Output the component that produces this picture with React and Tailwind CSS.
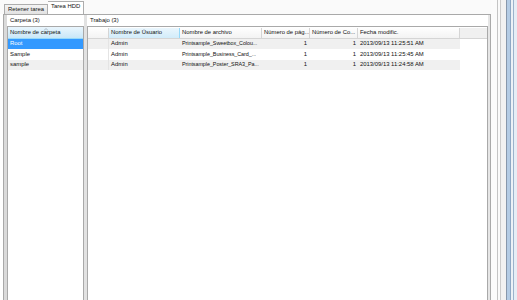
const rows = [
  { user: 'Admin', file: 'Printsample_Sweetbox_Colou...', pages: '1', copies: '1', date: '2013/09/13 11:25:51 AM' },
  { user: 'Admin', file: 'Printsample_Business_Card_...', pages: '1', copies: '1', date: '2013/09/13 11:25:45 AM' },
  { user: 'Admin', file: 'Printsample_Poster_SRA3_Pa...', pages: '1', copies: '1', date: '2013/09/13 11:24:58 AM' },
];

const folders = ['Root', 'Sample', 'sample'];

const SortCaret = () => (
  <svg className="absolute top-[1px] left-1/2 -translate-x-1/2" width="5" height="3" viewBox="0 0 5 3">
    <path d="M0.5 2.5 L2.5 0.5 L4.5 2.5" fill="none" stroke="#9aa7b5" strokeWidth="0.8" />
  </svg>
);

const FrameEdge = () => (
  <div className="w-[26px] flex shrink-0">
    <div className="w-[6px] bg-[#fbfbfb]" />
    <div className="w-[1px] bg-[#c4c4c4]" />
    <div className="w-[2px] bg-[#fafafa]" />
    <div className="w-[1px] bg-[#cbcbcb]" />
    <div className="w-[5px] bg-[#f1f1f1]" />
    <div className="w-[1px] bg-[#8797ab]" />
    <div className="w-[3px] bg-[#b3cbe4]" />
    <div className="w-[1px] bg-[#8ea7c4]" />
    <div className="w-[2px] bg-[#edf1f6]" />
    <div className="w-[1px] bg-[#9cb2cb]" />
    <div className="w-[3px] bg-[#e6edf5]" />
  </div>
);

export default function App() {
  return (
    <div className="w-[517px] h-[300px] overflow-hidden bg-white flex font-['Liberation_Sans',Arial,sans-serif] text-[5.9px] leading-none text-[#111]">
      <div className="w-[491px] flex flex-col">
        {/* tab strip */}
        <div className="h-[14px] flex items-end pl-[4px] bg-[#fafafa]">
          <div className="h-[10px] px-[3px] flex items-center border border-b-0 border-[#adadad] bg-gradient-to-b from-[#f4f4f4] to-[#e2e2e2]">
            Retener tarea
          </div>
          <div className="h-[13px] px-[3px] pb-[2px] flex items-center border border-b-0 border-l-0 border-[#adadad] bg-white">
            Tarea HDD
          </div>
        </div>

        {/* tab pane */}
        <div className="flex-1 ml-[3px] border border-b-0 border-[#a9a9a9] bg-white flex">
          {/* folders panel */}
          <div className="flex border-l-[3px] border-[#dadada]">
            <div className="w-[77px] flex flex-col">
              <div className="h-[11px] pl-[3px] pt-[1px] flex items-center">Carpeta (3)</div>
              <div className="flex-1 flex flex-col border border-b-0 border-[#a9a9a9]">
                <div className="relative h-[12px] pl-[2px] pt-[1px] flex items-center border-b border-[#96d9f9] bg-gradient-to-b from-[#eaf6fd] to-[#c9e7f8]">
                  <SortCaret />
                  Nombre de carpeta
                </div>
                {folders.map((f, i) => (
                  <div
                    key={f}
                    className={`h-[10.4px] pl-[2px] flex items-center ${
                      i === 0 ? 'bg-[#3399ff] text-white' : i === 2 ? 'bg-[#f0f0f0]' : 'bg-white'
                    }`}
                  >
                    {f}
                  </div>
                ))}
              </div>
            </div>
            <div className="w-[3px] bg-[#e2e2e2]" />
          </div>

          {/* jobs panel */}
          <div className="flex-1 flex">
            <div className="flex-1 flex flex-col">
              <div className="h-[11px] pl-[3px] pt-[1px] flex items-center">Trabajo (3)</div>
              <div className="flex-1 flex flex-col border border-b-0 border-[#a9a9a9]">
                <div className="h-[12px] pt-[1px] flex border-b border-[#d5d5d5] bg-gradient-to-b from-white to-[#f3f3f3]">
                  <div className="w-[21px] border-r border-[#d5d5d5]" />
                  <div className="relative w-[71px] pl-[2px] flex items-center border-r border-[#96d9f9] bg-gradient-to-b from-[#eaf6fd] to-[#d2ecfa]">
                    <SortCaret />
                    Nombre de Usuario
                  </div>
                  <div className="w-[82px] pl-[2px] flex items-center border-r border-[#d5d5d5] whitespace-nowrap overflow-hidden">
                    Nombre de archivo
                  </div>
                  <div className="w-[48px] pl-[2px] flex items-center border-r border-[#d5d5d5] whitespace-nowrap overflow-hidden">
                    Número de pág...
                  </div>
                  <div className="w-[48px] pl-[2px] flex items-center border-r border-[#d5d5d5] whitespace-nowrap overflow-hidden">
                    Número de Co...
                  </div>
                  <div className="w-[102px] pl-[2px] flex items-center border-r border-[#d5d5d5]">
                    Fecha modific.
                  </div>
                  <div className="flex-1 bg-[#f0f0f0]" />
                </div>
                {rows.map((r, i) => (
                  <div key={i} className={`w-[372px] h-[10.4px] flex ${i % 2 === 0 ? 'bg-[#f0f0f0]' : 'bg-white'}`}>
                    <div className="w-[21px] border-r border-[#e4e4e4]" />
                    <div className="w-[71px] pl-[2px] flex items-center">{r.user}</div>
                    <div className="w-[82px] pl-[2px] flex items-center whitespace-nowrap text-[5.4px] tracking-[-0.05px]">{r.file}</div>
                    <div className="w-[48px] pr-[3px] flex items-center justify-end">{r.pages}</div>
                    <div className="w-[48px] pr-[2px] flex items-center justify-end">{r.copies}</div>
                    <div className="w-[102px] pl-[2px] flex items-center whitespace-nowrap">{r.date}</div>
                  </div>
                ))}
              </div>
            </div>
            <div className="w-[2px] bg-[#e6e6e6]" />
          </div>
        </div>
      </div>
      <FrameEdge />
    </div>
  );
}
